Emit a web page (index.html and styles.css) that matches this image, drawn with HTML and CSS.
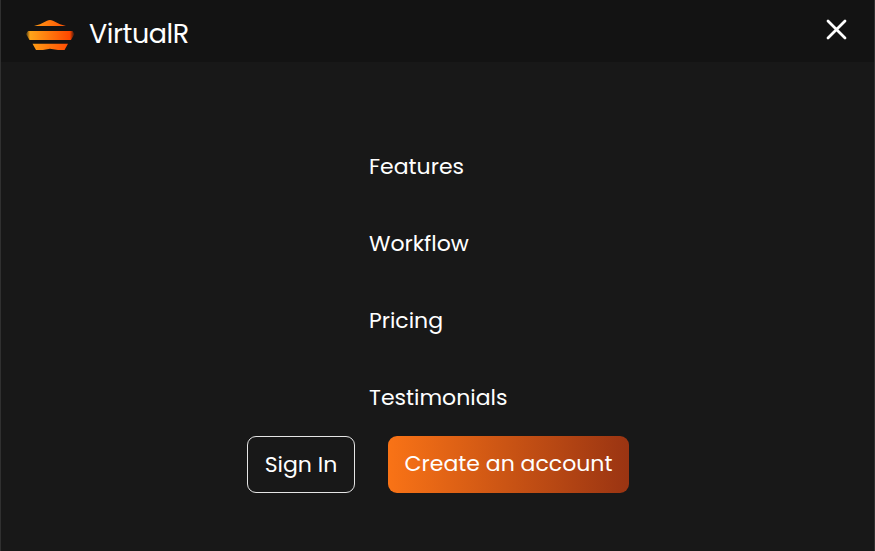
FILE: index.html
```html
<!DOCTYPE html>
<html lang="en">
<head>
<meta charset="utf-8">
<title>VirtualR</title>
<link rel="stylesheet" href="styles.css">
</head>
<body>
<header class="navbar">
  <a class="brand">
    <svg class="logo" width="50" height="32" viewBox="0 0 50 32">
      <defs>
        <linearGradient id="flame" x1="0" x2="50" y1="0" y2="0" gradientUnits="userSpaceOnUse">
          <stop offset="0" stop-color="#ffad18"/>
          <stop offset="1" stop-color="#ff3d00"/>
        </linearGradient>
        <linearGradient id="band" x1="0" x2="50" y1="0" y2="0" gradientUnits="userSpaceOnUse">
          <stop offset="0" stop-color="#ffad18" stop-opacity="0"/>
          <stop offset=".1" stop-color="#ffa51a"/>
          <stop offset=".9" stop-color="#ff4700"/>
          <stop offset="1" stop-color="#ff3d00" stop-opacity="0"/>
        </linearGradient>
      </defs>
      <path fill="url(#flame)" d="M9 7 15 5.200 22 1.800Q25 .4 28 1.800L35 5.200 41 7Z"/>
      <path fill="url(#band)" d="M3 12H47.500L49.500 15 46 21H4.500L1 15Z"/>
      <path fill="url(#flame)" d="M7.500 24.800H43L39.500 31 33 31 25 29.800 18 31 11 31Z"/>
    </svg>
    <span class="brand-name">VirtualR</span>
  </a>
  <button class="close" aria-label="Close menu">
    <svg width="22" height="22" viewBox="0 0 22 22"><path d="M2 2 19 19M19 2 2 19"/></svg>
  </button>
</header>
<main class="drawer">
  <nav class="links">
    <a>Features</a>
    <a>Workflow</a>
    <a>Pricing</a>
    <a>Testimonials</a>
  </nav>
  <div class="actions">
    <a class="button sign-in">Sign In</a>
    <a class="button create">Create an account</a>
  </div>
</main>
</body>
</html>
```
FILE: styles.css
```css
* { box-sizing: border-box; }
body {
  margin: 0;
  height: 551px;
  overflow: hidden;
  background: #181818;
  border-left: 1px solid #303030;
  border-right: 1px solid #303030;
  color: #fff;
  font-family: Poppins, Inter, sans-serif;
  font-size: 22px;
}
.navbar {
  display: flex;
  justify-content: space-between;
  height: 62px;
  padding: 19px 26px 0 24px;
  background: #131313;
}
.brand { display: flex; gap: 14px; }
.logo { filter: blur(.35px); }
.brand-name { font-size: 27px; line-height: 30px; letter-spacing: -.45px; white-space: nowrap; }
.close { width: 22px; height: 22px; padding: 0; border: 0; background: none; }
.close svg { display: block; fill: none; stroke: #fff; stroke-width: 2.8; stroke-linecap: round; }
.drawer { display: flex; flex-direction: column; align-items: center; padding-top: 66px; }
.links { display: flex; flex-direction: column; width: 139px; padding-left: 1px; }
.links a { height: 77px; line-height: 77px; white-space: nowrap; }
.actions { display: flex; gap: 33px; }
.button {
  display: flex;
  justify-content: center;
  height: 57px;
  padding-left: 1px;
  border-radius: 9px;
  white-space: nowrap;
}
.sign-in { width: 108px; border: 1px solid #e5e5e5; line-height: 56px; }
.create { width: 241px; background: linear-gradient(to right, #f97316, #9a3412); line-height: 55px; }
```
